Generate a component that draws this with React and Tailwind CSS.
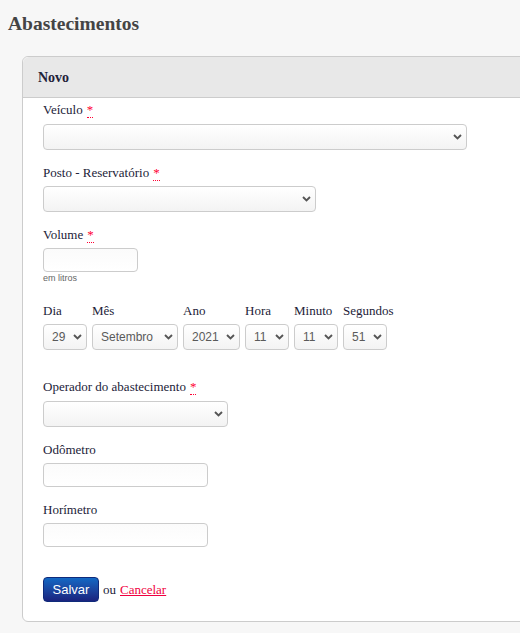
import React from "react";

const serif = "font-['Liberation_Serif','Times_New_Roman',serif]";
const sans = "font-['Liberation_Sans',Arial,sans-serif]";

function Required() {
  return (
    <abbr
      title="obrigatório"
      className="ml-[4px] text-[#ff0033] no-underline border-b border-dotted border-[#ff0033] cursor-help"
    >
      *
    </abbr>
  );
}

function Label({ children, required, className = "" }) {
  return (
    <label className={`block h-[18px] leading-[18px] text-[13px] text-[#222238] ${className}`}>
      {children}
      {required && <Required />}
    </label>
  );
}

function Chevron() {
  return (
    <svg
      className="pointer-events-none absolute right-[5px] top-1/2 -translate-y-1/2"
      width="9"
      height="6"
      viewBox="0 0 9 6"
    >
      <path d="M1 1 L4.5 4.4 L8 1" fill="none" stroke="#555" strokeWidth="1.9" />
    </svg>
  );
}

function Select({ width, value, className = "" }) {
  return (
    <div className={`relative ${className}`} style={{ width }}>
      <select
        defaultValue={value ?? ""}
        className={`${sans} block w-full h-[26px] appearance-none rounded-[4px] border border-[#cccccc] bg-gradient-to-b from-white to-[#f3f3f3] pl-[8px] pr-[14px] text-[12px] text-[#5a5a5a] outline-none`}
      >
        <option value={value ?? ""}>{value ?? ""}</option>
      </select>
      <Chevron />
    </div>
  );
}

function Input({ width }) {
  return (
    <input
      type="text"
      className="block h-[24px] rounded-[4px] border border-[#cccccc] bg-gradient-to-b from-[#fbfbfb] to-white px-[6px] text-[13px] outline-none"
      style={{ width }}
    />
  );
}

const dateFields = [
  { label: "Dia", value: "29", width: 44 },
  { label: "Mês", value: "Setembro", width: 86 },
  { label: "Ano", value: "2021", width: 57 },
  { label: "Hora", value: "11", width: 44 },
  { label: "Minuto", value: "11", width: 44 },
  { label: "Segundos", value: "51", width: 44 },
];

export default function App() {
  return (
    <div className={`${serif} w-[520px] h-[633px] overflow-hidden bg-[#f7f7f7]`}>
      <h1 className="pt-[12px] pl-[8px] h-[36px] leading-[24px] text-[19.5px] font-bold text-[#444]">
        Abastecimentos
      </h1>

      <div className="mt-[20px] ml-[22px] w-[530px] rounded-l-[6px] border border-[#cccccc] bg-white">
        {/* Header */}
        <div className="h-[41px] flex items-center pl-[15px] bg-[#e8e8e8] border-b border-[#cccccc] rounded-tl-[6px]">
          <h2 className="text-[14px] font-bold text-[#222238]">Novo</h2>
        </div>

        {/* Form body */}
        <form className="pl-[20px] pt-[3px] pb-[19px]" onSubmit={(e) => e.preventDefault()}>
          <Label required>Veículo</Label>
          <Select width={424} className="mt-[5px]" />

          <Label required className="mt-[14px]">Posto - Reservatório</Label>
          <Select width={273} className="mt-[4px]" />

          <Label required className="mt-[14px]">Volume</Label>
          <div className="mt-[4px]">
            <Input width={95} />
          </div>
          <p className={`${sans} h-[11px] leading-[12px] text-[9px] text-[#666]`}>em litros</p>

          <div className="mt-[19px] flex gap-[5px]">
            {dateFields.map((f) => (
              <div key={f.label} className="flex flex-col">
                <Label>{f.label}</Label>
                <Select width={f.width} value={f.value} className="mt-[4px]" />
              </div>
            ))}
          </div>

          <Label required className="mt-[28px]">Operador do abastecimento</Label>
          <Select width={185} className="mt-[5px]" />

          <Label className="mt-[14px]">Odômetro</Label>
          <div className="mt-[4px]">
            <Input width={165} />
          </div>

          <Label className="mt-[14px]">Horímetro</Label>
          <div className="mt-[4px]">
            <Input width={165} />
          </div>

          <div className="mt-[30px] flex items-center gap-[4px] text-[13px]">
            <button
              type="submit"
              className={`${sans} h-[25px] w-[56px] rounded-[4px] border border-[#0f2a7a] bg-gradient-to-b from-[#1268c4] to-[#1a237e] text-[13px] text-white`}
            >
              Salvar
            </button>
            <span className="text-[#222238]">ou</span>
            <a href="#" className="text-[#f00040] underline">
              Cancelar
            </a>
          </div>
        </form>
      </div>
    </div>
  );
}
